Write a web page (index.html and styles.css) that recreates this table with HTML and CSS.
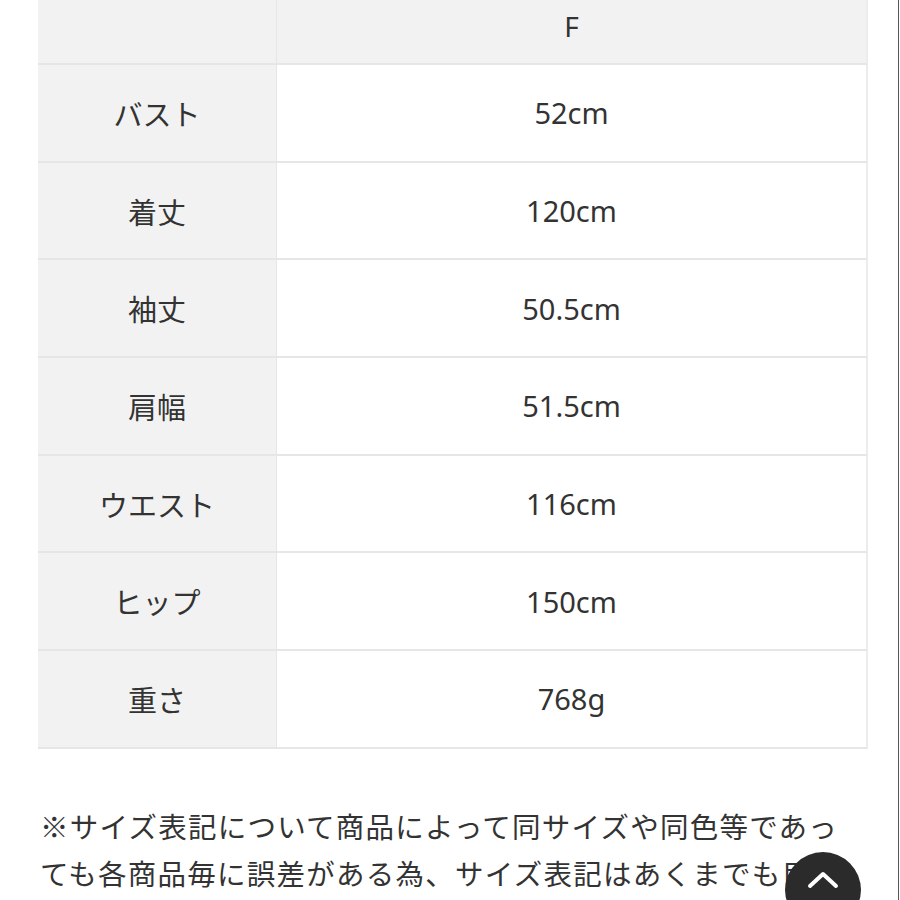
FILE: index.html
```html
<!DOCTYPE html>
<html lang="ja">
<head>
<meta charset="utf-8">
<link rel="stylesheet" href="styles.css">
</head>
<body>
<div class="page">
  <div class="size-table">
    <div class="cell head label"></div>
    <div class="cell head value">F</div>
    <div class="cell label">バスト</div>
    <div class="cell value">52cm</div>
    <div class="cell label">着丈</div>
    <div class="cell value">120cm</div>
    <div class="cell label">袖丈</div>
    <div class="cell value">50.5cm</div>
    <div class="cell label">肩幅</div>
    <div class="cell value">51.5cm</div>
    <div class="cell label">ウエスト</div>
    <div class="cell value">116cm</div>
    <div class="cell label">ヒップ</div>
    <div class="cell value">150cm</div>
    <div class="cell label">重さ</div>
    <div class="cell value">768g</div>
  </div>
  <p class="note">※サイズ表記について商品によって同サイズや同色等であっても各商品毎に誤差がある為、サイズ表記はあくまでも目安</p>
</div>
<button class="to-top" aria-label="ページトップへ">
  <svg width="34" height="20" viewBox="0 0 34 20"><path d="M4 17 L17 5 L30 17" fill="none" stroke="#fff" stroke-width="4" stroke-linecap="round" stroke-linejoin="round"/></svg>
</button>
</body>
</html>
```
FILE: styles.css
```css
html, body {
  margin: 0;
  padding: 0;
  background: #fff;
}
body {
  width: 898px;
  height: 900px;
  overflow: hidden;
  border-right: 1px solid #555;
  font-family: "Noto Sans", "Noto Sans CJK JP", sans-serif;
  color: #333;
}
.page {
  padding-left: 38px;
}
.size-table {
  display: grid;
  grid-template-columns: 239px 591px;
  grid-auto-rows: 97.7px;
  grid-template-rows: 65px;
  width: 830px;
}
.cell {
  box-sizing: border-box;
  display: flex;
  align-items: center;
  justify-content: center;
  font-size: 29px;
  border-bottom: 2px solid #e6e6e6;
}
.label {
  background: #f2f2f2;
  border-right: 1px solid #e6e6e6;
}
.value {
  background: #fff;
  border-right: 2px solid #ececec;
}
.head {
  background: #f2f2f2;
  padding-bottom: 12px;
  font-size: 28px;
}
.head.value {
  border-right: 2px solid #ececec;
}
.note {
  margin: 53px 0 0 2px;
  font-family: "Noto Sans CJK JP", sans-serif;
  font-size: 28.5px;
  letter-spacing: 1.25px;
  line-height: 47px;
  width: 810px;
  color: #333;
}
.to-top {
  position: fixed;
  left: 785px;
  top: 852px;
  width: 76px;
  height: 76px;
  border: 0;
  border-radius: 50%;
  background: #2b2b2b;
  padding: 0 0 22px 0;
  display: flex;
  align-items: center;
  justify-content: center;
}
```
